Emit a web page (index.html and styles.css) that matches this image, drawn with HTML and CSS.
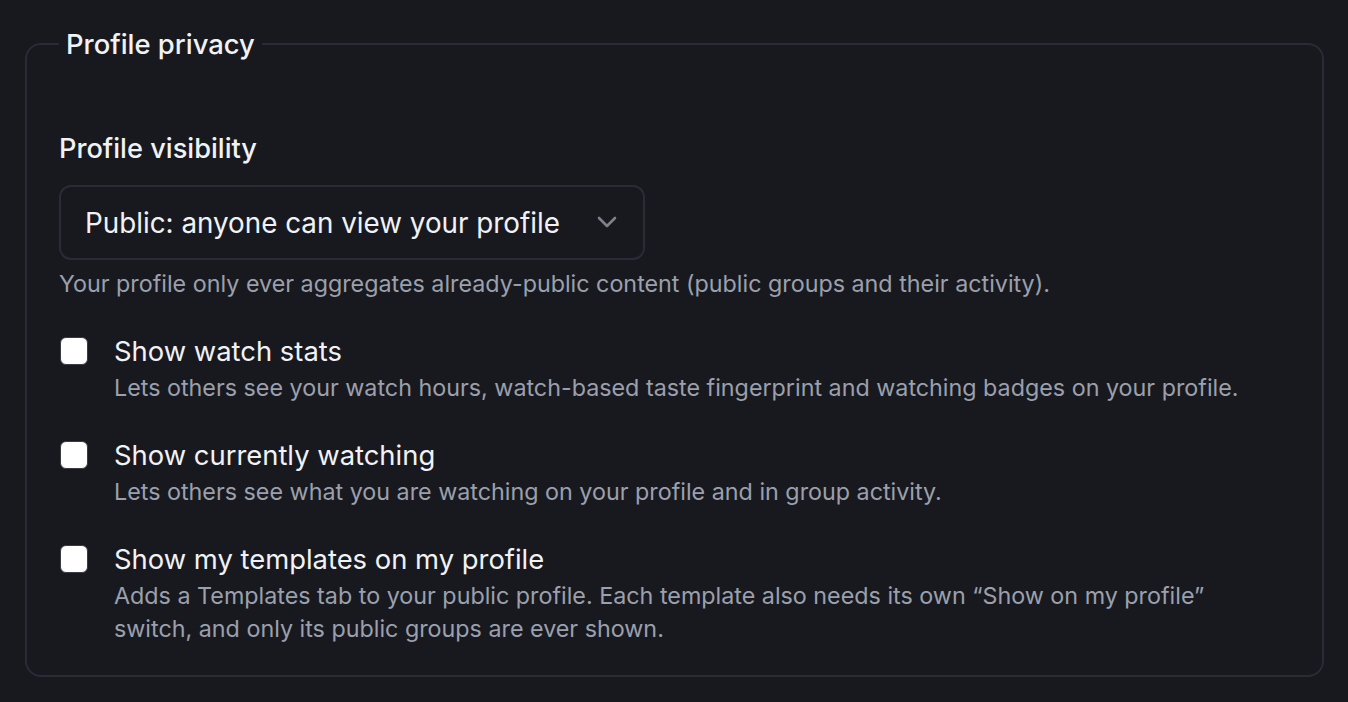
FILE: index.html
```html
<!DOCTYPE html>
<html lang="en">
<head>
  <meta charset="UTF-8">
  <meta name="viewport" content="width=device-width, initial-scale=1.0">
  <title>Profile privacy</title>
  <link rel="stylesheet" href="styles.css">
</head>
<body>
  <div class="page">
    <fieldset class="section">
      <legend>Profile privacy</legend>

      <div class="section-body">
        <div class="field">
          <label for="visibility" class="field-label">Profile visibility</label>
          <div class="select-wrap">
            <select id="visibility" class="select">
              <option>Public: anyone can view your profile</option>
              <option>Private: only you can view your profile</option>
            </select>
            <svg class="chevron" width="20" height="12" viewBox="0 0 20 12" fill="none" stroke="currentColor" stroke-width="2.6" stroke-linecap="round" stroke-linejoin="round">
              <path d="M2 2l8 8 8-8"/>
            </svg>
          </div>
          <p class="hint">Your profile only ever aggregates already-public content (public groups and their activity).</p>
        </div>

        <label class="check">
          <input type="checkbox">
          <span class="check-text">
            <span class="check-title">Show watch stats</span>
            <span class="check-desc">Lets others see your watch hours, watch-based taste fingerprint and watching badges on your profile.</span>
          </span>
        </label>

        <label class="check">
          <input type="checkbox">
          <span class="check-text">
            <span class="check-title">Show currently watching</span>
            <span class="check-desc">Lets others see what you are watching on your profile and in group activity.</span>
          </span>
        </label>

        <label class="check">
          <input type="checkbox">
          <span class="check-text">
            <span class="check-title">Show my templates on my profile</span>
            <span class="check-desc">Adds a Templates tab to your public profile. Each template also needs its own “Show on my profile” switch, and only its public groups are ever shown.</span>
          </span>
        </label>
      </div>
    </fieldset>
  </div>
</body>
</html>
```

FILE: styles.css
```css
:root {
  --color-bg: #18191f;
  --color-border: #2a2b36;
  --color-text: #f1f2f5;
  --color-text-muted: #9ba0ad;
  --color-chevron: #7d818c;
}

body {
  font-family: Inter, "Noto Sans", sans-serif;
  background-color: var(--color-bg);
  color: var(--color-text);
  margin: 0;
}

.page {
  padding: 25px 24px 24px 25px;
}

.section {
  margin: 0;
  padding: 0 32px 30px 32px;
  border: 2px solid var(--color-border);
  border-radius: 16px;
}

.section legend {
  font-size: 27.4px;
  line-height: 38px;
  font-weight: 500;
  padding: 0 7px;
}

.section-body {
  padding-top: 66px;
  display: flex;
  flex-direction: column;
  gap: 32px;
}

.field-label {
  display: block;
  font-size: 27.2px;
  line-height: 39px;
  font-weight: 500;
  margin-bottom: 17px;
}

.select-wrap {
  position: relative;
  display: inline-block;
}

.select {
  appearance: none;
  -webkit-appearance: none;
  font-family: inherit;
  font-size: 27.8px;
  color: var(--color-text);
  background-color: var(--color-bg);
  border: 2px solid var(--color-border);
  border-radius: 12px;
  width: 586px;
  height: 75px;
  padding: 0 60px 0 24px;
  outline: none;
}

.chevron {
  position: absolute;
  right: 28px;
  top: 31px;
  color: var(--color-chevron);
  pointer-events: none;
}

.hint {
  margin: 7px 0 0;
  font-size: 23.3px;
  line-height: 33px;
  color: var(--color-text-muted);
}

.check {
  display: flex;
  align-items: flex-start;
  gap: 26px;
  cursor: pointer;
}

.check input {
  appearance: none;
  -webkit-appearance: none;
  flex-shrink: 0;
  width: 28px;
  height: 28px;
  margin: 5px 0 0 1px;
  background-color: #fff;
  border: 1px solid #3a3b46;
  border-radius: 6px;
}

.check-text {
  display: flex;
  flex-direction: column;
}

.check-title {
  font-size: 27.4px;
  line-height: 39px;
}

.check-desc {
  font-size: 23.3px;
  line-height: 33px;
  color: var(--color-text-muted);
  max-width: 1145px;
}
```
